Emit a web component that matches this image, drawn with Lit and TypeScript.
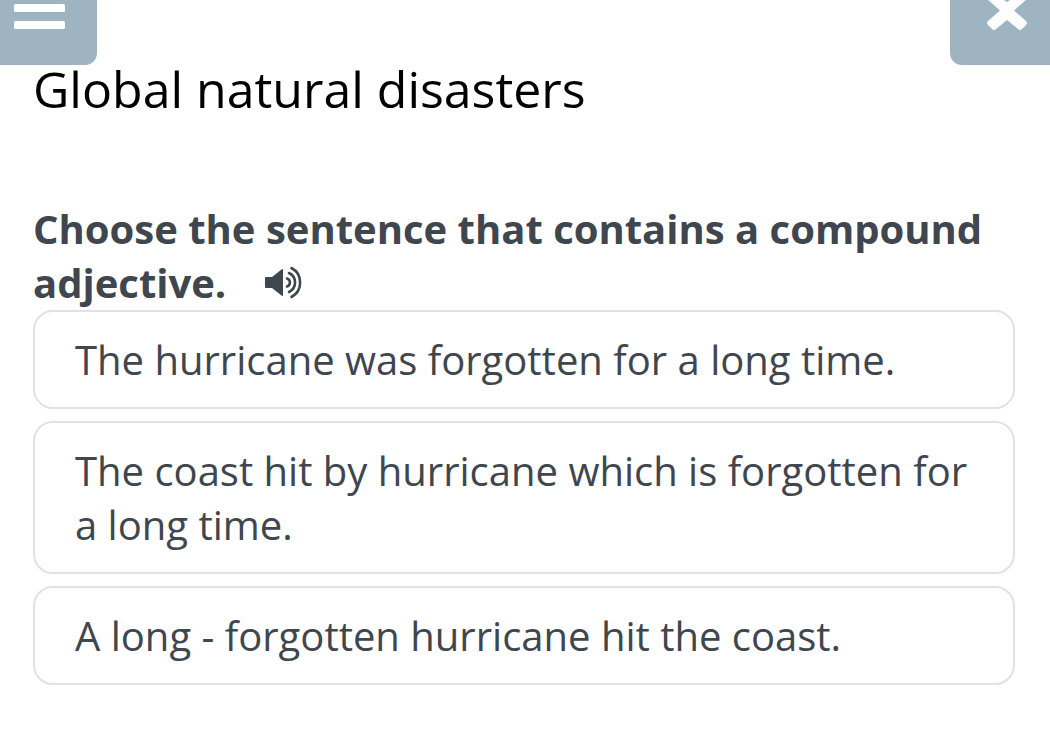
import { LitElement, html, css } from "lit";
import { customElement } from "lit/decorators.js";

@customElement("app-root")
class AppRoot extends LitElement {
  static styles = css`
    :host { display: block; min-height: 100vh; background: #fff; color: #40464e; font-family: "Open Sans", sans-serif; }
    button { font: inherit; color: inherit; border: 0; margin: 0; padding: 0; background: none; cursor: pointer; }
    .bar { display: flex; justify-content: space-between; }
    .tab { display: flex; height: 65px; background: #9fb4c1; color: #fff; }
    .menu { width: 97px; border-radius: 0 0 12px 0; padding-left: 14px; }
    .close { width: 100px; border-radius: 0 0 0 12px; padding-left: 36px; }
    svg { display: block; fill: currentColor; }
    main { padding: 0 35px 32px 33px; }
    h1 { margin: -10px 0 0; font-size: 50px; line-height: 68px; font-weight: 400; color: #000; padding-bottom: 79px; }
    h2 { margin: 0; font-size: 40px; line-height: 54px; font-weight: 700; }
    .sound { display: inline-block; margin-left: 28px; }
    .sound svg { overflow: visible; }
    .waves { fill: none; stroke: currentColor; stroke-width: 2.6; stroke-linecap: round; }
    .options { display: flex; flex-direction: column; gap: 12px; }
    .option { text-align: left; font-size: 40px; line-height: 54px; border: 2px solid #e2e2e2; border-radius: 20px; padding: 21px 40px 20px; }
  `;
  options = [
    "The hurricane was forgotten for a long time.",
    "The coast hit by hurricane which is forgotten for a long time.",
    "A long - forgotten hurricane hit the coast.",
  ];
  render() {
    return html`
      <header class="bar">
        <button class="tab menu" aria-label="Menu">
          <svg width="52" height="30" viewBox="0 0 52 30"><rect y="4" width="51" height="8" rx="1.5"/><rect y="21" width="51" height="8" rx="1.5"/></svg>
        </button>
        <button class="tab close" aria-label="Close">
          <svg width="42" height="32" viewBox="0 0 42 32"><path d="M7 -7L21 2L35 -7L41 -1L28 10.500L40 21Q42 23 40 25L36 29Q34 31 32 29L21 20L10 29Q8 31 6 29L2 25Q0 23 2 21L14 10.500L1 -1Z"/></svg>
        </button>
      </header>
      <main>
        <h1>Global natural disasters</h1>
        <h2>Choose the sentence that contains a compound adjective.
          <button class="sound" aria-label="Listen">
            <svg width="38" height="30" viewBox="0 2 38 30">
              <path d="M1 11H7L16.500 3.500Q18 2.500 18 4V29Q18 30.500 16.500 29.500L7 22H1Q0 22 0 21V12Q0 11 1 11Z"/>
              <g class="waves"><path d="M22 12.500A4.200 4.200 0 0 1 22 20.500"/><path d="M24 7A10.500 10.500 0 0 1 24 26"/><path d="M26.500 2A16.500 16.500 0 0 1 26.500 31"/></g>
            </svg>
          </button>
        </h2>
        <div class="options">
          ${this.options.map((o) => html`<button class="option">${o}</button>`)}
        </div>
      </main>
    `;
  }
}
